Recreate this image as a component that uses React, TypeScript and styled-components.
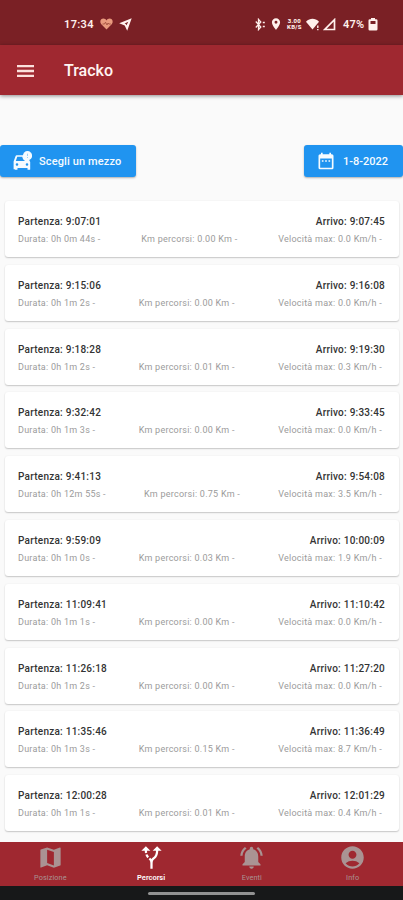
import React from "react";
import styled, { createGlobalStyle } from "styled-components";
import {
  MdAccountCircle,
  MdAltRoute,
  MdDateRange,
  MdMap,
  MdNotificationsActive,
  MdPlace,
} from "react-icons/md";

const GlobalStyle = createGlobalStyle`
  * { box-sizing: border-box; }
  body { margin: 0; background: #fafafa; font-family: Roboto, "Liberation Sans", sans-serif; }
`;

const Screen = styled.div`
  width: 403px;
  height: 900px;
  display: flex;
  flex-direction: column;
  background: #fafafa;
  overflow: hidden;
`;

const StatusBar = styled.div`
  height: 45px;
  flex: none;
  display: flex;
  align-items: center;
  justify-content: space-between;
  padding: 3px 25px 0 64px;
  background: #7a2025;
  color: #fff0ec;
  font-size: 11px;
  font-weight: 600;
`;

const StatusGroup = styled.div<{ $gap: number }>`
  display: flex;
  align-items: center;
  gap: ${(p) => p.$gap}px;
  svg { display: block; flex: none; }
`;

const Clock = styled.span`
  letter-spacing: 0.35px;
`;

const NetSpeed = styled.span`
  display: flex;
  flex-direction: column;
  align-items: center;
  width: 16px;
  font-size: 6px;
  font-weight: 800;
  letter-spacing: 0.3px;
  span { height: 6px; line-height: 6px; }
`;

const Percent = styled.span`
  margin-left: 3px;
  letter-spacing: 0.3px;
`;

const AppBar = styled.header`
  height: 50px;
  flex: none;
  display: flex;
  align-items: center;
  gap: 30px;
  padding: 1px 17px 0;
  background: #9f2830;
  color: #fbe0dc;
  box-shadow: 0 1px 4px rgba(0, 0, 0, 0.45);
`;

const Title = styled.h1`
  margin: 0;
  font-size: 16px;
  font-weight: 500;
  color: #fff4f2;
`;

const Filters = styled.div`
  height: 106px;
  flex: none;
  display: flex;
  justify-content: space-between;
  padding-top: 50px;
`;

const FilterButton = styled.button<{ $width: number; $spacing?: number }>`
  width: ${(p) => p.$width}px;
  height: 32px;
  display: flex;
  align-items: center;
  gap: 7px;
  padding: 0 0 0 12px;
  border: 0;
  border-radius: 3px;
  background: #2094f0;
  color: #f5fbff;
  font: 500 11px Roboto, sans-serif;
  letter-spacing: ${(p) => p.$spacing ?? 0}px;
  white-space: nowrap;
  box-shadow: 0 1px 2px rgba(0, 0, 0, 0.3);
  svg { flex: none; }
`;

const List = styled.main`
  flex: 1;
  min-height: 0;
  display: flex;
  flex-direction: column;
  gap: 7.8px;
  padding: 0 4px 0 5px;
`;

const Card = styled.article`
  height: 56px;
  flex: none;
  display: flex;
  flex-direction: column;
  gap: 5px;
  padding: 14px 14px 0 13px;
  background: #fff;
  border-radius: 3px;
  box-shadow: 0 1px 1.5px rgba(0, 0, 0, 0.2), 0 0 2px rgba(0, 0, 0, 0.05);
`;

const Times = styled.div`
  display: flex;
  justify-content: space-between;
  font-size: 10px;
  line-height: 13px;
  font-weight: 500;
  color: #333;
  letter-spacing: 0.24px;
`;

const Details = styled.div`
  display: flex;
  justify-content: space-between;
  padding-right: 3px;
  font-size: 9px;
  line-height: 13px;
  color: #9b9b9b;
  letter-spacing: 0.25px;
`;

const Nav = styled.nav`
  height: 44px;
  flex: none;
  display: grid;
  grid-template-columns: repeat(4, 1fr);
  background: #9f2830;
`;

const NavItem = styled.div<{ $active?: boolean }>`
  display: flex;
  flex-direction: column;
  align-items: center;
  padding-top: 2px;
  gap: 2px;
  color: ${(p) => (p.$active ? "#fff" : "#aa9393")};
  font-size: ${(p) => (p.$active ? 7.5 : 7.3)}px;
  line-height: 9px;
  font-weight: ${(p) => (p.$active ? 600 : 400)};
  letter-spacing: ${(p) => (p.$active ? 0 : 0.1)}px;
`;

const GestureBar = styled.div`
  height: 14px;
  flex: none;
  display: flex;
  justify-content: center;
  padding-top: 6px;
  background: #171819;
`;

const GesturePill = styled.div`
  width: 107px;
  height: 3px;
  border-radius: 2px;
  background: #929292;
`;

const MenuIcon = () => (
  <svg width="17" height="12" viewBox="0 0 17 12">
    <path d="M0 1.2h17M0 6h17M0 10.8h17" stroke="currentColor" strokeWidth="2.3" />
  </svg>
);

const CarIcon = () => (
  <svg width="20" height="20" viewBox="0 0 20 20">
    <path
      fillRule="evenodd"
      fill="currentColor"
      d="M4.600 4.200h7.100c.2 2.400 1.800 4.400 4.300 4.800h1.200l1 2.100v7.100q0 .6-.6.600h-1.500q-.6 0-.6-.6v-1.300h-10v1.300q0 .6-.6.600H3.400q-.6 0-.6-.6H1.600V10.500L3.600 5q.3-.8 1-.8ZM5.300 5.800 3.800 10h9.400c-1.700-.9-2.700-2.400-2.900-4.200ZM5 12.200a1.300 1.300 0 1 0 0 2.600 1.300 1.300 0 0 0 0-2.600Zm10 0a1.300 1.300 0 1 0 0 2.600 1.300 1.300 0 0 0 0-2.600Z"
    />
    <circle cx="15.5" cy="4.700" r="4.600" fill="currentColor" />
    <path d="M15.5 2.700v2.300M15.500 6v1" stroke="#8ecbf8" strokeWidth=".9" />
  </svg>
);

const BluetoothIcon = () => (
  <svg width="13" height="13" viewBox="0 0 13 13">
    <path d="m3.800 3.500 5 5.500-2.300 2.600V1.400l2.300 2.600-5 5.500" fill="none" stroke="currentColor" strokeWidth="1.300" />
    <path d="M10.800 4.500h2M10.800 8.500h2" stroke="currentColor" strokeWidth="1.600" />
  </svg>
);

const HeartIcon = () => (
  <svg width="13" height="12" viewBox="0 0 13 12">
    <path d="M6.500 11.500 1.300 6.300C-.9 3.300 1 .6 3.400.6c1.300 0 2.400.7 3.100 1.800C7.200 1.300 8.300.6 9.600.6c2.400 0 4.300 2.700 2.100 5.700Z" fill="#e99a7e" />
    <path d="M2.500 6h2l1-1.800L7 7l1-2 .8 1h2" fill="none" stroke="#a4513f" strokeWidth=".9" />
  </svg>
);

const SendIcon = () => (
  <svg width="13" height="13" viewBox="0 0 13 13">
    <path
      fillRule="evenodd"
      d="M12.700.3 8.200 12.700 5.700 7.600.2 5.200ZM9.300 3.700 5.600 5.400 6.700 6 7.500 7.200Z"
      fill="#fff2ef"
    />
  </svg>
);

const WifiIcon = () => (
  <svg width="14" height="13" viewBox="0 0 14 13">
    <path d="M0 3.700C4-.1 9-.1 13 3.700L6.500 11.500Z" fill="currentColor" />
    <path d="M11.800 7.500v2.500M11.800 11v1.300" stroke="currentColor" strokeWidth="1.400" />
  </svg>
);

const SignalIcon = () => (
  <svg width="13" height="13" viewBox="0 0 13 13">
    <path d="M11.500 1.700v9.800H1.800Z" fill="none" stroke="currentColor" strokeWidth="1.700" />
  </svg>
);

const BatteryIcon = () => (
  <svg width="10" height="13" viewBox="0 0 10 13">
    <path d="M3 0h4v1.300h1.200Q9.500 1.300 9.500 2.600v8.600q0 1.300-1.300 1.300H1.800Q.5 12.500.5 11.200V2.600Q.5 1.300 1.800 1.300H3Z" fill="currentColor" />
    <path d="M2.500 3h5v3h-5Z" fill="#7a2025" />
  </svg>
);

const trips = [
  ["9:07:01", "9:07:45", "0h 0m 44s", "0.00", "0.0"],
  ["9:15:06", "9:16:08", "0h 1m 2s", "0.00", "0.0"],
  ["9:18:28", "9:19:30", "0h 1m 2s", "0.01", "0.3"],
  ["9:32:42", "9:33:45", "0h 1m 3s", "0.00", "0.0"],
  ["9:41:13", "9:54:08", "0h 12m 55s", "0.75", "3.5"],
  ["9:59:09", "10:00:09", "0h 1m 0s", "0.03", "1.9"],
  ["11:09:41", "11:10:42", "0h 1m 1s", "0.00", "0.0"],
  ["11:26:18", "11:27:20", "0h 1m 2s", "0.00", "0.0"],
  ["11:35:46", "11:36:49", "0h 1m 3s", "0.15", "8.7"],
  ["12:00:28", "12:01:29", "0h 1m 1s", "0.01", "0.4"],
];

export default function App() {
  return (
    <>
      <GlobalStyle />
      <Screen>
        <StatusBar>
          <StatusGroup $gap={6}>
            <Clock>17:34</Clock>
            <HeartIcon />
            <SendIcon />
          </StatusGroup>
          <StatusGroup $gap={3.5}>
            <BluetoothIcon />
            <MdPlace size={14} />
            <NetSpeed><span>3.00</span><span>KB/S</span></NetSpeed>
            <WifiIcon />
            <SignalIcon />
            <Percent>47%</Percent>
            <BatteryIcon />
          </StatusGroup>
        </StatusBar>
        <AppBar>
          <MenuIcon />
          <Title>Tracko</Title>
        </AppBar>
        <Filters>
          <FilterButton $width={136} $spacing={0.12}>
            <CarIcon />
            Scegli un mezzo
          </FilterButton>
          <FilterButton $width={99}>
            <MdDateRange size={20} />
            1-8-2022
          </FilterButton>
        </Filters>
        <List>
          {trips.map(([start, end, duration, distance, speed]) => (
            <Card key={start}>
              <Times>
                <span>Partenza: {start}</span>
                <span>Arrivo: {end}</span>
              </Times>
              <Details>
                <span>Durata: {duration} -</span>
                <span>Km percorsi: {distance} Km -</span>
                <span>Velocità max: {speed} Km/h -</span>
              </Details>
            </Card>
          ))}
        </List>
        <Nav>
          <NavItem><MdMap size={27} />Posizione</NavItem>
          <NavItem $active><MdAltRoute size={27} />Percorsi</NavItem>
          <NavItem><MdNotificationsActive size={27} />Eventi</NavItem>
          <NavItem><MdAccountCircle size={27} />Info</NavItem>
        </Nav>
        <GestureBar><GesturePill /></GestureBar>
      </Screen>
    </>
  );
}
